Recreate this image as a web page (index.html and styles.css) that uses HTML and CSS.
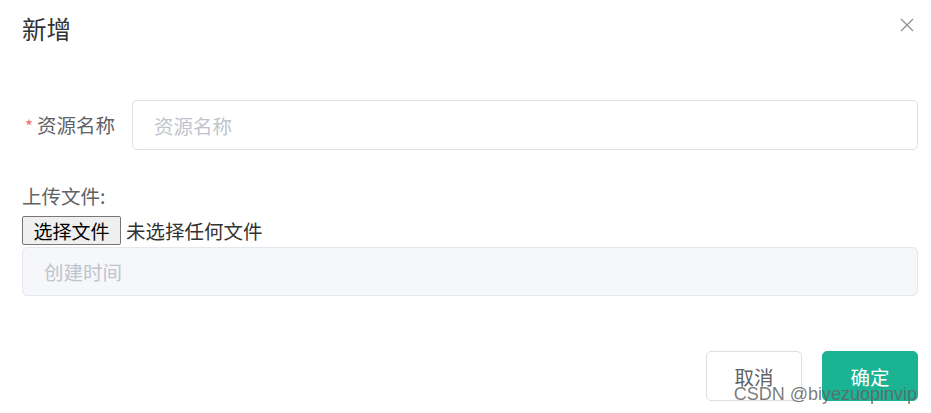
FILE: index.html
```html
<!DOCTYPE html>
<html lang="zh-CN">
<head>
<meta charset="utf-8">
<title>新增</title>
<link rel="stylesheet" href="styles.css">
</head>
<body>
<div class="dialog">
  <div class="header">
    <span class="title">新增</span>
    <svg class="close" viewBox="0 0 14 14" width="14" height="14"><path d="M1 1 L13 13 M13 1 L1 13" stroke="#909399" stroke-width="1.4" fill="none"/></svg>
  </div>
  <div class="body">
    <div class="form-row">
      <label class="label"><span class="star">*</span>资源名称</label>
      <div class="input"><span class="placeholder">资源名称</span></div>
    </div>
    <div class="upload-label">上传文件:</div>
    <div class="file-row">
      <span class="file-btn">选择文件</span>
      <span class="file-text">未选择任何文件</span>
    </div>
    <div class="input disabled"><span class="placeholder">创建时间</span></div>
  </div>
  <div class="footer">
    <span class="btn btn-default">取消</span>
    <span class="btn btn-primary">确定</span>
  </div>
  <div class="watermark">CSDN @biyezuopinvip</div>
</div>
</body>
</html>
```

FILE: styles.css
```css
* { box-sizing: border-box; }
html, body { margin: 0; padding: 0; background: #fff; }
body {
  font-family: "Noto Sans CJK SC", "Microsoft YaHei", sans-serif;
  color: #606266;
}
.dialog {
  position: relative;
  width: 931px;
  height: 413px;
  padding: 0 13px 0 22px;
}
.header {
  display: flex;
  justify-content: space-between;
  align-items: flex-start;
  padding-top: 13px;
  padding-right: 4px;
}
.title {
  font-size: 24.5px;
  line-height: 32px;
  color: #303133;
}
.close {
  margin-top: 5px;
  display: block;
}
.body {
  padding-top: 55px;
}
.form-row {
  display: flex;
  align-items: center;
  height: 50px;
}
.label {
  width: 110px;
  flex: none;
  text-align: right;
  padding-right: 17px;
  font-size: 19.5px;
  line-height: 26px;
  color: #606266;
  white-space: nowrap;
}
.star {
  color: #f56c6c;
  margin-right: 4px;
  font-size: 17px;
}
.input {
  flex: 1;
  height: 50px;
  border: 1px solid #dcdfe6;
  border-radius: 5px;
  display: flex;
  align-items: center;
  padding-left: 21px;
  font-size: 19.5px;
}
.placeholder { color: #c0c4cc; }
.upload-label {
  margin-top: 33px;
  font-size: 19.5px;
  line-height: 26px;
  color: #606266;
}
.file-row {
  margin-top: 7px;
  display: flex;
  align-items: center;
  height: 29px;
  font-size: 19.5px;
  color: #333;
}
.file-btn {
  display: inline-flex;
  align-items: center;
  justify-content: center;
  width: 99px;
  height: 29px;
  background: #efefef;
  border: 1px solid #767676;
  border-radius: 2px;
  color: #000;
  font-size: 19px;
}
.file-text {
  margin-left: 5px;
  color: #333;
}
.input.disabled {
  margin-top: 2px;
  height: 49px;
  background: #f5f7fa;
  border-color: #e4e7ed;
}
.footer {
  margin-top: 55px;
  display: flex;
  justify-content: flex-end;
  gap: 20px;
}
.btn {
  display: inline-flex;
  align-items: center;
  justify-content: center;
  width: 96px;
  height: 50px;
  border-radius: 5px;
  font-size: 19.5px;
}
.btn-default {
  border: 1px solid #dcdfe6;
  color: #606266;
  background: #fff;
}
.btn-primary {
  background: #1ab394;
  color: #fff;
  border: 1px solid #1ab394;
}
.watermark {
  position: absolute;
  right: 14px;
  bottom: 9px;
  font-family: "Liberation Sans", Arial, sans-serif;
  font-size: 18px;
  line-height: 20px;
  color: rgba(100, 100, 100, 0.85);
}
```
